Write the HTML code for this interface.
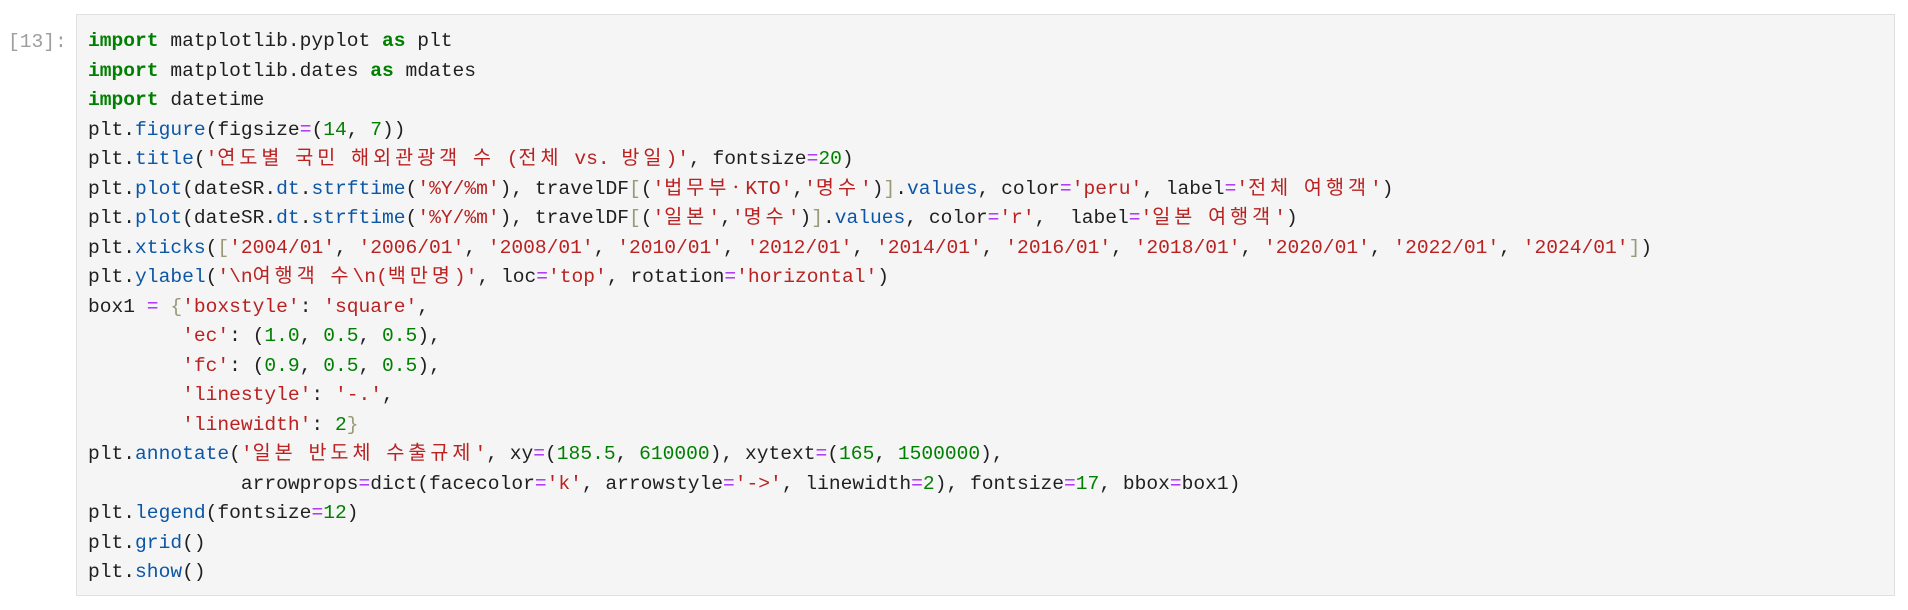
<!DOCTYPE html>
<html><head><meta charset="utf-8"><style>
body{margin:0;width:1908px;height:610px;background:#fff;overflow:hidden;font-family:"Liberation Mono","Noto Sans CJK KR",monospace;}
.p{position:absolute;left:8px;top:27px;font-size:19.6px;color:#9e9e9e;line-height:30px}
.box{position:absolute;left:76px;top:14px;width:1817px;height:580px;background:#f5f5f5;border:1px solid #e0e0e0}
pre{margin:0;position:absolute;left:11px;top:12px;font-family:"Liberation Mono","Noto Sans CJK KR",monospace;font-size:19.6px;line-height:29.5px;color:#1f1f1f}
pre div{height:29.5px;overflow:visible;white-space:pre}
.kw{color:#008000;font-weight:bold}.f{color:#0b56a6}.s{color:#ba2121}.n{color:#008000}.o{color:#aa22ff}.b{color:#999977}
.k{letter-spacing:4px;font-family:"Noto Sans CJK KR",sans-serif;line-height:0}
</style></head><body>
<div class="p">[13]:</div>
<div class="box"><pre><div><span class="kw">import</span> matplotlib.pyplot <span class="kw">as</span> plt</div><div><span class="kw">import</span> matplotlib.dates <span class="kw">as</span> mdates</div><div><span class="kw">import</span> datetime</div><div>plt.<span class="f">figure</span>(figsize<span class="o">=</span>(<span class="n">14</span>, <span class="n">7</span>))</div><div>plt.<span class="f">title</span>(<span class="s">'<span class="k">연도별</span> <span class="k">국민</span> <span class="k">해외관광객</span> <span class="k">수</span> (<span class="k">전체</span> vs. <span class="k">방일</span>)'</span>, fontsize<span class="o">=</span><span class="n">20</span>)</div><div>plt.<span class="f">plot</span>(dateSR.<span class="f">dt</span>.<span class="f">strftime</span>(<span class="s">'%Y/%m'</span>), travelDF<span class="b">[</span>(<span class="s">'<span class="k">법무부·</span>KTO'</span>,<span class="s">'<span class="k">명수</span>'</span>)<span class="b">]</span>.<span class="f">values</span>, color<span class="o">=</span><span class="s">'peru'</span>, label<span class="o">=</span><span class="s">'<span class="k">전체</span> <span class="k">여행객</span>'</span>)</div><div>plt.<span class="f">plot</span>(dateSR.<span class="f">dt</span>.<span class="f">strftime</span>(<span class="s">'%Y/%m'</span>), travelDF<span class="b">[</span>(<span class="s">'<span class="k">일본</span>'</span>,<span class="s">'<span class="k">명수</span>'</span>)<span class="b">]</span>.<span class="f">values</span>, color<span class="o">=</span><span class="s">'r'</span>,  label<span class="o">=</span><span class="s">'<span class="k">일본</span> <span class="k">여행객</span>'</span>)</div><div>plt.<span class="f">xticks</span>(<span class="b">[</span><span class="s">'2004/01'</span>, <span class="s">'2006/01'</span>, <span class="s">'2008/01'</span>, <span class="s">'2010/01'</span>, <span class="s">'2012/01'</span>, <span class="s">'2014/01'</span>, <span class="s">'2016/01'</span>, <span class="s">'2018/01'</span>, <span class="s">'2020/01'</span>, <span class="s">'2022/01'</span>, <span class="s">'2024/01'</span><span class="b">]</span>)</div><div>plt.<span class="f">ylabel</span>(<span class="s">'\n<span class="k">여행객</span> <span class="k">수</span>\n(<span class="k">백만명</span>)'</span>, loc<span class="o">=</span><span class="s">'top'</span>, rotation<span class="o">=</span><span class="s">'horizontal'</span>)</div><div>box1 <span class="o">=</span> <span class="b">{</span><span class="s">'boxstyle'</span>: <span class="s">'square'</span>,</div><div>        <span class="s">'ec'</span>: (<span class="n">1.0</span>, <span class="n">0.5</span>, <span class="n">0.5</span>),</div><div>        <span class="s">'fc'</span>: (<span class="n">0.9</span>, <span class="n">0.5</span>, <span class="n">0.5</span>),</div><div>        <span class="s">'linestyle'</span>: <span class="s">'-.'</span>,</div><div>        <span class="s">'linewidth'</span>: <span class="n">2</span><span class="b">}</span></div><div>plt.<span class="f">annotate</span>(<span class="s">'<span class="k">일본</span> <span class="k">반도체</span> <span class="k">수출규제</span>'</span>, xy<span class="o">=</span>(<span class="n">185.5</span>, <span class="n">610000</span>), xytext<span class="o">=</span>(<span class="n">165</span>, <span class="n">1500000</span>),</div><div>             arrowprops<span class="o">=</span>dict(facecolor<span class="o">=</span><span class="s">'k'</span>, arrowstyle<span class="o">=</span><span class="s">'-&gt;'</span>, linewidth<span class="o">=</span><span class="n">2</span>), fontsize<span class="o">=</span><span class="n">17</span>, bbox<span class="o">=</span>box1)</div><div>plt.<span class="f">legend</span>(fontsize<span class="o">=</span><span class="n">12</span>)</div><div>plt.<span class="f">grid</span>()</div><div>plt.<span class="f">show</span>()</div></pre></div>
</body></html>
